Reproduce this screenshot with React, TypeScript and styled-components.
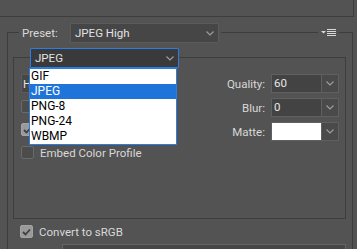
import React from 'react';
import styled, { createGlobalStyle } from 'styled-components';

const FONT = `"Roboto", "Liberation Sans", sans-serif`;
const LINE = '#3d3d3d';
const BG = '#535353';

const Global = createGlobalStyle`
  html, body { margin: 0; padding: 0; background: ${BG}; }
  body { font-family: ${FONT}; font-size: 11.5px; color: #d8d8d8; }
  * { box-sizing: border-box; }
`;

const Page = styled.div`
  position: relative;
  width: 357px;
  height: 249px;
  overflow: hidden;
  background: ${BG};
`;

const TopBox = styled.div`
  width: 354px;
  height: 17px;
  border-bottom: 1px solid ${LINE};
  border-right: 1px solid ${LINE};
`;

const OuterGroup = styled.div`
  margin: 6px 0 0 7px;
  width: 346px;
`;

const HeaderRow = styled.div`
  display: flex;
  height: 20px;
`;

const Corner = styled.div<{ $side: 'left' | 'right'; $w?: number }>`
  flex: ${(p) => (p.$w ? `0 0 ${p.$w}px` : '1 1 auto')};
  margin-top: 9px;
  border-top: 1px solid ${LINE};
  ${(p) => (p.$side === 'left' ? `border-left: 1px solid ${LINE};` : `border-right: 1px solid ${LINE};`)}
`;

const HLine = styled.div<{ $ml: number; $mr: number }>`
  flex: 1 1 auto;
  margin: 9px ${(p) => p.$mr}px 0 ${(p) => p.$ml}px;
  height: 1px;
  background: ${LINE};
`;

const HeaderLabel = styled.div`
  flex: 0 0 51px;
  padding-left: 3px;
  line-height: 20px;
  white-space: nowrap;
`;

const Select = styled.div<{ $w: number; $focus?: boolean }>`
  flex: 0 0 ${(p) => p.$w}px;
  width: ${(p) => p.$w}px;
  height: 20px;
  display: flex;
  align-items: center;
  justify-content: space-between;
  padding: 0 4px 0 4px;
  background: ${(p) => (p.$focus ? '#3a3a3a' : '#464646')};
  border: 1px solid ${(p) => (p.$focus ? '#2b7de6' : '#5b5b5b')};
  border-radius: 1px;
  color: #e2e2e2;
  white-space: nowrap;
`;

const MenuIcon = styled.svg`
  flex: 0 0 15px;
  margin: 0 3px;
`;

const OuterBody = styled.div`
  border-left: 1px solid ${LINE};
  border-right: 1px solid ${LINE};
  padding: 5px 6px 0 5px;
`;

const InnerBody = styled.div`
  height: 151px;
  display: flex;
  justify-content: space-between;
  padding: 6px 6px 0 7px;
  border-left: 1px solid ${LINE};
  border-right: 1px solid ${LINE};
  border-bottom: 1px solid ${LINE};
`;

const LeftCol = styled.div`
  display: flex;
  flex-direction: column;
`;

const SmallSelect = styled.div`
  width: 110px;
  height: 19px;
  display: flex;
  align-items: center;
  padding-left: 1px;
  background: #464646;
  border: 1px solid #5b5b5b;
  color: #e2e2e2;
  margin-bottom: 2px;
`;

const CheckRow = styled.div<{ $h: number; $pl?: number }>`
  display: flex;
  align-items: center;
  gap: 6px;
  height: ${(p) => p.$h}px;
  padding-left: ${(p) => p.$pl ?? 0}px;
  white-space: nowrap;
`;

const Box = styled.div<{ $on?: boolean }>`
  width: 13px;
  height: 13px;
  flex: 0 0 13px;
  border-radius: 2px;
  border: 1px solid ${(p) => (p.$on ? '#a3a3a3' : '#6a6a6a')};
  background: ${(p) => (p.$on ? '#9a9a9a' : '#4c4c4c')};
  display: flex;
  align-items: center;
  justify-content: center;
`;

const RightGrid = styled.div`
  display: grid;
  grid-template-columns: auto 68px;
  grid-auto-rows: 19px;
  column-gap: 6px;
  row-gap: 5px;
  align-items: center;
`;

const FieldLabel = styled.div`
  text-align: right;
  white-space: nowrap;
`;

const Field = styled.div`
  display: flex;
  height: 19px;
  border: 1px solid #606060;
`;

const FieldInput = styled.div<{ $swatch?: boolean }>`
  flex: 1 1 auto;
  background: ${(p) => (p.$swatch ? '#ffffff' : '#434343')};
  color: #e6e6e6;
  padding-left: 2px;
  line-height: 17px;
`;

const FieldBtn = styled.div`
  flex: 0 0 17px;
  border-left: 1px solid #606060;
  background: #4a4a4a;
  display: flex;
  align-items: center;
  justify-content: center;
`;

const BottomSelect = styled.div`
  margin-left: 49px;
  width: 284px;
  height: 20px;
  border: 1px solid #656565;
  background: #474747;
`;

const Menu = styled.ul`
  position: absolute;
  left: 29px;
  top: 68px;
  width: 148px;
  margin: 0;
  padding: 0;
  list-style: none;
  background: #ffffff;
  border: 1px solid #2b7de6;
  color: #000;
  font-size: 12px;
`;

const MenuItem = styled.li<{ $sel?: boolean }>`
  height: 15px;
  line-height: 15px;
  padding-left: 1px;
  background: ${(p) => (p.$sel ? '#1e74d8' : 'transparent')};
  color: ${(p) => (p.$sel ? '#fff' : '#000')};
`;

const Chevron = () => (
  <svg width="8" height="5" viewBox="0 0 8 5">
    <polyline points="0.5,0.5 4,4 7.5,0.5" fill="none" stroke="#9c9c9c" strokeWidth="1.2" />
  </svg>
);

const Check = () => (
  <svg width="9" height="8" viewBox="0 0 9 8">
    <polyline points="1,4 3.5,6.5 8,1.5" fill="none" stroke="#3f3f3f" strokeWidth="1.8" />
  </svg>
);

export default function App() {
  const formats = ['GIF', 'JPEG', 'PNG-8', 'PNG-24', 'WBMP'];
  return (
    <Page>
      <Global />
      <TopBox />
      <OuterGroup>
        <HeaderRow>
          <Corner $side="left" $w={12} />
          <HeaderLabel>Preset:</HeaderLabel>
          <Select $w={149}>
            <span>JPEG High</span>
            <Chevron />
          </Select>
          <HLine $ml={2} $mr={0} />
          <MenuIcon width="15" height="20" viewBox="0 0 15 20">
            <polygon points="0,8 5,8 2.5,10.5" fill="#d8d8d8" />
            <rect x="6" y="6" width="9" height="1" fill="#d8d8d8" />
            <rect x="6" y="8" width="9" height="1" fill="#d8d8d8" />
            <rect x="6" y="10" width="9" height="1" fill="#d8d8d8" />
            <rect x="6" y="12" width="9" height="1" fill="#d8d8d8" />
          </MenuIcon>
          <Corner $side="right" $w={14} />
        </HeaderRow>
        <OuterBody>
          <HeaderRow>
            <Corner $side="left" $w={17} />
            <Select $w={149} $focus>
              <span>JPEG</span>
              <Chevron />
            </Select>
            <Corner $side="right" />
          </HeaderRow>
          <InnerBody>
            <LeftCol>
              <SmallSelect>H</SmallSelect>
              <CheckRow $h={23}>
                <Box />
              </CheckRow>
              <CheckRow $h={23}>
                <Box $on>
                  <Check />
                </Box>
              </CheckRow>
              <CheckRow $h={23}>
                <Box />
                <span>Embed Color Profile</span>
              </CheckRow>
            </LeftCol>
            <RightGrid>
              <FieldLabel>Quality:</FieldLabel>
              <Field>
                <FieldInput>60</FieldInput>
                <FieldBtn>
                  <Chevron />
                </FieldBtn>
              </Field>
              <FieldLabel>Blur:</FieldLabel>
              <Field>
                <FieldInput>0</FieldInput>
                <FieldBtn>
                  <Chevron />
                </FieldBtn>
              </Field>
              <FieldLabel>Matte:</FieldLabel>
              <Field>
                <FieldInput $swatch />
                <FieldBtn>
                  <Chevron />
                </FieldBtn>
              </Field>
            </RightGrid>
          </InnerBody>
          <CheckRow $h={25} $pl={7}>
            <Box $on>
              <Check />
            </Box>
            <span>Convert to sRGB</span>
          </CheckRow>
          <BottomSelect />
        </OuterBody>
      </OuterGroup>
      <Menu>
        {formats.map((f) => (
          <MenuItem key={f} $sel={f === 'JPEG'}>
            {f}
          </MenuItem>
        ))}
      </Menu>
    </Page>
  );
}
